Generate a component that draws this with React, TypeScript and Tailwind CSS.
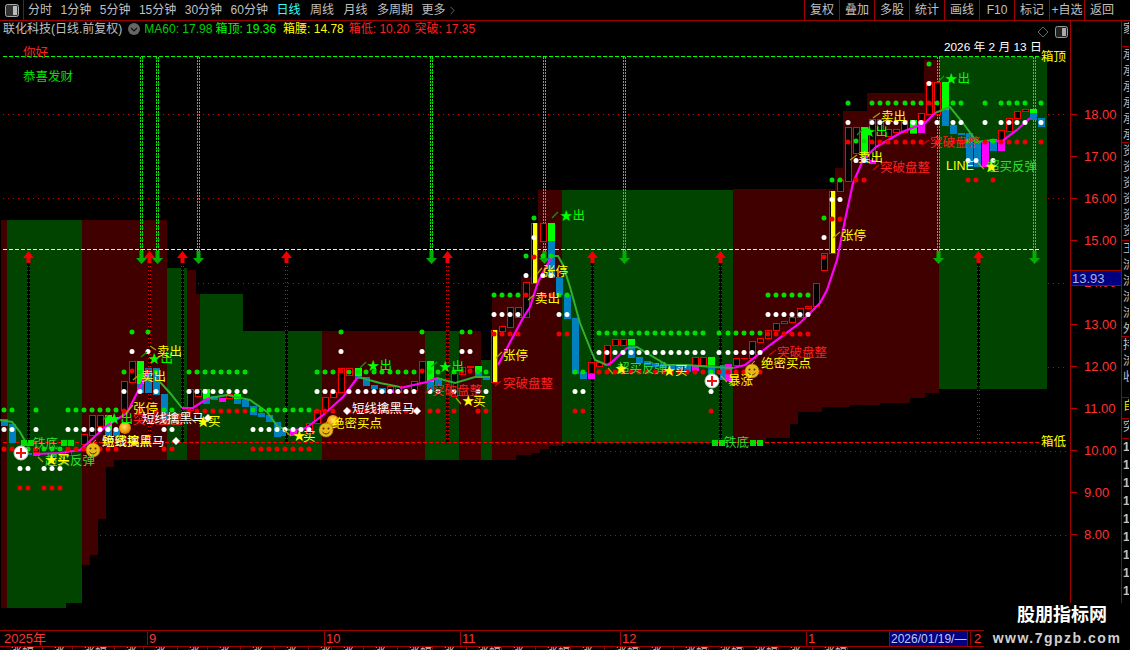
import { ChevronRight } from 'lucide-react';

const FONT = "[font-family:'Liberation_Sans','Noto_Sans_CJK_SC',sans-serif]";

const R = '#400000';
const G = '#004400';

// x0, x1, top, colour. the floor polygon cuts them off at the bottom
const bands: [number, number, number, string][] = [
  [1, 7, 220, R],
  [7, 82, 220, G],
  [82, 167, 220, R],
  [167, 187, 268, G],
  [187, 196, 270, R],
  [196, 200, 294, R],
  [200, 243, 294, G],
  [243, 322, 331, G],
  [322, 425, 331, R],
  [425, 459, 331, G],
  [459, 481, 331, R],
  [481, 492, 360, G],
  [492, 521, 295, R],
  [521, 538, 277, R],
  [538, 562, 190, R],
  [562, 733, 190, G],
  [733, 835, 189, R],
  [835, 843, 168, R],
  [843, 867, 111, R],
  [867, 924, 93, R],
  [924, 939, 60, R],
  [939, 1047, 57, G],
];

const floor =
  '0,612 0,608 66,608 66,603 82,603 82,565 90,565 90,555 98,555 98,519 106,519 106,467 114,467 114,460 516,460 516,455 532,455 532,453 540,453 540,449 549,449 549,446 563,446 563,443 766,443 766,438 790,438 790,424 798,424 798,412 822,412 822,407 850,407 850,405 880,405 880,403 910,403 910,398 925,398 925,393 939,393 939,389 1047,389 1047,612';

type Kind = 'h' | 'g' | 'b' | 'm' | 'y' | 'f';

const candles: [number, number, number, Kind][] = [
  [4, 419, 426, 'b'], [12, 424, 443, 'b'], [28, 453, 455, 'b'], [36, 452, 456, 'm'], [36, 448, 452, 'h'],
  [52, 455, 457, 'b'], [68, 450, 455, 'h'], [84, 434, 444, 'h'], [92, 415, 435, 'h'], [100, 415, 426, 'h'],
  [108, 415, 430, 'g'], [108, 430, 436, 'b'], [116, 430, 436, 'b'], [124, 381, 410, 'h'], [132, 361, 382, 'h'],
  [140, 361, 384, 'g'], [140, 384, 393, 'b'], [148, 368, 393, 'b'], [156, 368, 395, 'b'], [164, 394, 422, 'b'],
  [190, 389, 410, 'h'], [198, 389, 396, 'h'], [206, 389, 399, 'g'], [206, 399, 404, 'b'], [214, 396, 400, 'b'],
  [222, 398, 402, 'm'], [229, 394, 398, 'h'], [237, 394, 399, 'g'], [237, 399, 404, 'b'], [245, 400, 407, 'b'],
  [253, 406, 415, 'b'], [261, 413, 417, 'b'], [269, 415, 422, 'b'], [277, 422, 437, 'b'],
  [282, 430, 436, 'b'], [293, 430, 436, 'm'], [309, 423, 433, 'h'], [317, 410, 423, 'h'], [325, 397, 410, 'h'],
  [333, 392, 397, 'h'], [341, 368, 392, 'h'], [349, 368, 375, 'h'], [358, 368, 376, 'g'], [358, 376, 379, 'b'],
  [366, 377, 386, 'b'], [374, 385, 389, 'b'], [382, 388, 393, 'b'], [390, 386, 393, 'm'], [390, 386, 389, 'h'],
  [398, 386, 392, 'h'], [414, 381, 390, 'h'], [422, 361, 382, 'h'], [430, 361, 382, 'g'], [430, 382, 392, 'b'],
  [438, 378, 386, 'b'], [454, 373, 396, 'h'], [462, 367, 374, 'h'], [470, 366, 368, 'f'], [478, 366, 372, 'g'],
  [478, 372, 377, 'b'], [486, 376, 380, 'b'], [494, 330, 382, 'y'], [502, 326, 331, 'h'], [510, 307, 327, 'h'],
  [518, 307, 317, 'h'], [526, 282, 317, 'h'], [534, 223, 283, 'y'], [543, 223, 241, 'h'], [551, 223, 241, 'g'],
  [551, 241, 278, 'b'], [559, 277, 295, 'b'], [567, 295, 319, 'b'], [575, 318, 374, 'b'], [583, 372, 379, 'b'],
  [591, 373, 379, 'm'], [591, 362, 373, 'h'], [599, 362, 366, 'h'], [607, 345, 365, 'h'], [615, 339, 345, 'h'],
  [623, 339, 345, 'h'], [631, 339, 345, 'g'], [631, 345, 358, 'b'], [639, 357, 363, 'b'], [647, 361, 365, 'b'],
  [655, 363, 367, 'b'], [663, 364, 368, 'b'], [671, 365, 369, 'b'], [679, 365, 370, 'b'], [687, 365, 372, 'b'],
  [695, 357, 366, 'h'], [695, 366, 371, 'm'], [703, 357, 365, 'h'], [711, 357, 365, 'g'], [711, 365, 380, 'b'],
  [723, 365, 380, 'b'], [728, 364, 381, 'm'], [736, 358, 365, 'h'], [744, 358, 359, 'f'], [752, 341, 358, 'h'],
  [760, 338, 342, 'h'], [768, 330, 338, 'h'], [776, 323, 330, 'h'], [784, 321, 323, 'h'], [792, 317, 322, 'h'],
  [800, 308, 317, 'h'], [808, 306, 308, 'h'], [816, 283, 306, 'h'], [824, 253, 270, 'h'], [832, 191, 253, 'y'],
  [840, 180, 191, 'h'], [848, 127, 181, 'h'], [856, 127, 153, 'h'], [864, 127, 155, 'g'], [864, 155, 163, 'b'],
  [872, 119, 160, 'h'], [872, 160, 164, 'm'], [880, 119, 130, 'h'], [888, 129, 136, 'h'], [896, 129, 132, 'h'],
  [904, 120, 132, 'h'], [913, 120, 133, 'g'], [913, 133, 134, 'b'], [921, 120, 133, 'm'], [921, 113, 120, 'h'],
  [929, 82, 114, 'h'], [937, 82, 114, 'h'], [945, 82, 110, 'g'], [945, 110, 126, 'b'], [953, 125, 134, 'b'],
  [961, 133, 135, 'b'], [969, 133, 167, 'b'], [977, 142, 167, 'b'], [985, 142, 167, 'm'], [993, 139, 142, 'g'],
  [993, 142, 151, 'b'], [1001, 130, 141, 'h'], [1001, 141, 151, 'm'], [1009, 118, 131, 'h'], [1017, 111, 118, 'h'],
  [1025, 109, 111, 'h'], [1033, 109, 113, 'g'], [1033, 113, 120, 'b'], [1041, 118, 127, 'b'],
];

const greenLines = [
  '0,420 12,422 20,432 28,446',
  '160,382 170,393 182,408',
  '210,398 227,395 250,400 267,412 278,427 290,430',
  '358,377 380,383 400,387',
  '437,378 455,383 475,377 490,377',
  '552,256 558,256 563,265 570,287 580,323 590,348 595,360 607,365',
  '627,348 637,347 650,355 667,365 687,365 713,367 733,368',
  '935,113 950,107 963,123 977,142 993,140',
];

const pinkLines = [
  '36,454 60,453 80,450 90,441 105,427 127,413 140,387 147,372',
  '182,408 193,408 205,400 210,398',
  '290,431 306,428 323,415 343,397 358,377',
  '400,388 427,382 437,378',
  '498,365 523,318 530,307 538,282 547,265 552,256',
  '607,365 612,362 627,348',
  '733,368 745,365 770,345 800,323 820,303 827,290 837,260 845,220 853,183 863,160 876,147 902,132 925,123 935,113',
  '993,140 1001,142 1017,130 1030,118',
];

// each column: green dot at gy, white 19.5 lower, red 39 lower
const dotGroups: [number, number[]][] = [
  [410, [4, 12, 36, 68, 76, 84, 92, 100, 108, 116, 164, 172, 253, 261, 269, 277, 285, 293, 301, 309]],
  [449, [20, 28, 44, 52, 60]],
  [372, [124, 140, 156, 189, 197, 205, 213, 221, 229, 237, 245, 317, 325, 333, 349, 358, 366, 374, 382, 390, 398, 406, 414, 430, 438, 454, 478, 486, 575, 583, 711]],
  [332, [132, 148, 341, 422, 462, 470]],
  [295, [494, 502, 510, 518, 559, 567, 768, 776, 784, 792, 800, 808]],
  [256, [526, 543, 551]],
  [218, [534, 824]],
  [333, [599, 607, 615, 623, 631, 639, 647, 655, 663, 671, 679, 687, 695, 703, 719, 728, 736, 744, 752, 760]],
  [180, [832, 840]],
  [141, [856, 864, 968, 976, 993]],
  [103, [848, 872, 880, 888, 896, 905, 913, 921, 937, 953, 961, 985, 1001, 1009, 1017, 1025, 1041]],
  [64, [929]],
];

const YEL = '#ffff00';
const GRN = '#00ff00';
const LGR = '#33dd33';
const RED = '#ff2020';
const WHT = '#ffffff';

// text, x, baseline y, colour
const labels: [string, number, number, string][] = [
  ['你好', 23, 57, RED],
  ['恭喜发财', 23, 81, '#00e000'],
  ['箱顶', 1041, 61, YEL],
  ['箱低', 1041, 446, YEL],
  ['铁底', 33, 448, LGR],
  ['铁底', 724, 447, LGR],
  ['超买反弹', 45, 465, LGR],
  ['★', 45, 464, YEL],
  ['买', 57, 464, YEL],
  ['★出', 108, 423, GRN],
  ['短线擒黑马', 102, 446, WHT],
  ['绝密买点', 102, 446, YEL],
  ['张停', 133, 413, YEL],
  ['突破盘整', 133, 424, RED],
  ['短线擒黑马', 142, 423, WHT],
  ['★', 197, 426, YEL],
  ['买', 208, 426, YEL],
  ['★出', 148, 363, GRN],
  ['卖出', 157, 356, YEL],
  ['卖出', 141, 381, YEL],
  ['★', 293, 440, YEL],
  ['买', 303, 441, YEL],
  ['绝密买点', 332, 428, YEL],
  ['短线擒黑马', 352, 413, WHT],
  ['★出', 367, 370, GRN],
  ['★出', 439, 371, GRN],
  ['突破盘整', 432, 395, RED],
  ['★', 462, 405, YEL],
  ['买', 473, 406, YEL],
  ['张停', 503, 360, YEL],
  ['突破盘整', 503, 388, RED],
  ['卖出', 535, 303, YEL],
  ['张停', 543, 276, YEL],
  ['★出', 560, 220, GRN],
  ['超买反弹', 617, 373, LGR],
  ['★', 615, 373, YEL],
  ['★', 663, 375, YEL],
  ['买', 675, 375, YEL],
  ['暴涨', 728, 385, YEL],
  ['绝密买点', 761, 368, YEL],
  ['突破盘整', 777, 357, RED],
  ['张停', 841, 240, YEL],
  ['突破盘整', 880, 172, RED],
  ['卖出', 858, 162, YEL],
  ['★出', 863, 136, GRN],
  ['卖出', 881, 121, YEL],
  ['突破盘整', 930, 147, RED],
  ['★出', 945, 83, GRN],
  ['LINE', 946, 170, YEL],
  ['超买反弹', 987, 171, LGR],
  ['★', 985, 171, YEL],
];

// little pointer strokes in front of the labels: x1,y1,x2,y2,colour
const pointers: [number, number, number, number, string][] = [
  [38, 457, 43, 462, '#b0a000'], [150, 346, 156, 350, '#b0a000'], [133, 380, 140, 374, '#b0a000'],
  [127, 412, 133, 405, '#b0a000'], [141, 357, 147, 352, '#00a000'], [103, 420, 108, 415, '#00a000'],
  [190, 418, 196, 423, '#b0a000'], [284, 430, 291, 436, '#b0a000'], [360, 368, 366, 362, '#00a000'],
  [431, 367, 437, 362, '#00a000'], [425, 393, 431, 388, '#cc0000'], [456, 398, 461, 404, '#b0a000'],
  [496, 358, 502, 352, '#b0a000'], [495, 386, 501, 381, '#cc0000'], [528, 300, 534, 295, '#b0a000'],
  [537, 274, 542, 268, '#b0a000'], [552, 218, 558, 212, '#00a000'], [608, 368, 613, 374, '#b0a000'],
  [721, 376, 727, 382, '#b0a000'], [769, 355, 776, 350, '#cc0000'], [833, 238, 840, 232, '#b0a000'],
  [873, 170, 879, 165, '#cc0000'], [850, 160, 857, 155, '#b0a000'], [857, 135, 862, 130, '#00a000'],
  [873, 118, 880, 113, '#b0a000'], [922, 145, 929, 140, '#cc0000'], [938, 82, 944, 76, '#00a000'],
  [978, 163, 984, 169, '#b0a000'],
];

const greenArrows = [141, 157, 198, 431, 544, 624, 938, 1034];
const redArrows = [28, 149, 182, 286, 447, 592, 720, 978];
const ironMarks = [21, 28, 61, 68, 712, 719, 750, 757];

const leftTabs = ['分时', '1分钟', '5分钟', '15分钟', '30分钟', '60分钟', '日线', '周线', '月线', '多周期'];
const rightBtns = ['复权', '叠加', '多股', '统计', '画线', 'F10', '标记', '+自选', '返回'];
const axis = ['18.00', '17.00', '16.00', '15.00', '14.00', '13.00', '12.00', '11.00', '10.00', '9.00', '8.00'];

const sideCells: { h: number; text: string; cls: string }[] = [
  { h: 26, text: '家', cls: 'text-[#c0c0c0]' },
  { h: 96, text: '承承承承承承', cls: 'text-[#c0c0c0]' },
  { h: 98, text: '资资资资资资', cls: 'text-[#c0c0c0]' },
  { h: 96, text: '王流流流流外', cls: 'text-[#c0c0c0]' },
  { h: 61, text: '持流收', cls: 'text-[#c0c0c0]' },
  { h: 21, text: '自', cls: 'text-[#e0e000]' },
  { h: 20, text: '突', cls: 'text-[#c0c0c0]' },
];

const dateCells = [43, 30, 42, 29, 34, 30, 33, 34, 34, 23, 32, 34, 35, 34, 35, 34, 35, 34, 35, 34, 35, 35, 35, 34, 35];

function Candle({ c }: { c: [number, number, number, Kind] }) {
  const [x, top, bottom, kind] = c;
  const left = x - 3;
  const h = bottom - top;
  if (kind === 'h') return <rect x={left + 0.5} y={top + 0.5} width={6} height={h} fill="#000" stroke="#ff0000" />;
  if (kind === 'y')
    return (
      <g>
        <rect x={left + 0.5} y={top + 0.5} width={6} height={h} fill="#000" stroke="#ff0000" />
        <rect x={x - 1.5} y={top} width={4} height={h} fill="#ffff00" />
      </g>
    );
  const fill = kind === 'g' ? '#00ff00' : kind === 'b' ? '#0080c0' : kind === 'm' ? '#ff00ff' : '#ff0000';
  return <rect x={left} y={top} width={7} height={h} fill={fill} />;
}

function Smiley({ x, y }: { x: number; y: number }) {
  return (
    <g>
      <circle cx={x} cy={y} r={7} fill="#e8b818" stroke="#a88000" strokeWidth={0.5} />
      <circle cx={x - 2.5} cy={y - 1.5} r={1} fill="#503000" />
      <circle cx={x + 2.5} cy={y - 1.5} r={1} fill="#503000" />
      <path d={`M${x - 3.5} ${y + 2} Q${x} ${y + 6} ${x + 3.5} ${y + 2}`} fill="none" stroke="#503000" />
      <path d={`M${x} ${y - 7} q1 -2 3 -3`} fill="none" stroke="#e8b818" />
    </g>
  );
}

function Ball({ x, y }: { x: number; y: number }) {
  return <circle cx={x} cy={y} r={6} fill="url(#ball)" />;
}

function Plus({ x, y }: { x: number; y: number }) {
  return (
    <g>
      <circle cx={x} cy={y} r={7} fill="#fff" stroke="#c8c8c8" />
      <rect x={x - 5} y={y - 1} width={10} height={2} fill="#ee1111" />
      <rect x={x - 1} y={y - 5} width={2} height={10} fill="#ee1111" />
    </g>
  );
}

function Diamond({ x, y }: { x: number; y: number }) {
  return <polygon points={`${x - 4},${y} ${x},${y - 4} ${x + 4},${y} ${x},${y + 4}`} fill="#fff" />;
}

function Chart() {
  return (
    <svg viewBox="0 37 1070 593" width={1070} height={593} className={`block ${FONT}`} fontSize={12.5}>
      <defs>
        <radialGradient id="ball" cx="45%" cy="40%" r="65%">
          <stop offset="0%" stopColor="#ffe060" />
          <stop offset="70%" stopColor="#f09000" />
          <stop offset="100%" stopColor="#a06000" />
        </radialGradient>
      </defs>

      {[114, 198, 283, 367].map((y) => (
        <line key={y} x1={3} x2={1068} y1={y + 0.5} y2={y + 0.5} stroke="#d00000" strokeDasharray="1 4" />
      ))}

      {bands.map(([x0, x1, top, fill]) => (
        <rect key={x0} x={x0} y={top} width={x1 - x0} height={612 - top} fill={fill} shapeRendering="crispEdges" />
      ))}
      <polygon points={floor} fill="#000" shapeRendering="crispEdges" />

      {[451, 535].map((y) => (
        <line key={y} x1={y === 451 ? 550 : 100} x2={1068} y1={y + 0.5} y2={y + 0.5} stroke="#d00000" strokeDasharray="1 4" />
      ))}

      {greenArrows.map((x) => (
        <g key={x}>
          <line x1={x - 0.5} x2={x - 0.5} y1={57} y2={252} stroke="#00f000" strokeDasharray="2 1" />
          <line x1={x + 1.5} x2={x + 1.5} y1={57} y2={252} stroke="#00f000" strokeDasharray="2 1" />
          <polygon
            points={`${x - 1.5},251 ${x + 2.5},251 ${x + 2.5},258 ${x + 6},258 ${x + 0.5},264 ${x - 5},258 ${x - 1.5},258`}
            fill="#00b000"
          />
        </g>
      ))}
      {redArrows.map((x) => (
        <g key={x}>
          <rect x={x - 1} y={262} width={3} height={180} fill="#000" shapeRendering="crispEdges" />
          <line x1={x - 0.5} x2={x - 0.5} y1={262} y2={442} stroke="#e00000" strokeDasharray="1 3" />
          <line x1={x + 1.5} x2={x + 1.5} y1={262} y2={442} stroke="#e00000" strokeDasharray="1 3" />
          <polygon
            points={`${x + 0.5},251 ${x + 6},258 ${x + 2.5},258 ${x + 2.5},263 ${x - 1.5},263 ${x - 1.5},258 ${x - 5},258`}
            fill="#f00000"
          />
        </g>
      ))}

      <g shapeRendering="crispEdges">
        <line x1={3} x2={1040} y1={56.5} y2={56.5} stroke="#00ff00" strokeDasharray="4 2" />
        <line x1={3} x2={1040} y1={249.5} y2={249.5} stroke="#ffff40" strokeDasharray="4 2" />
        <line x1={3} x2={1040} y1={442.5} y2={442.5} stroke="#ff0000" strokeDasharray="4 2" />
        {candles.map((c, i) => (
          <Candle key={i} c={c} />
        ))}
      </g>

      {greenLines.map((p) => (
        <polyline key={p} points={p} fill="none" stroke="#30b030" strokeWidth={2} />
      ))}
      {pinkLines.map((p) => (
        <polyline key={p} points={p} fill="none" stroke="#ff00ff" strokeWidth={2.2} />
      ))}

      {dotGroups.map(([gy, xs]) =>
        xs.map((x) => (
          <g key={`${gy}-${x}`}>
            <circle cx={x} cy={gy} r={2.5} fill="#00e000" />
            <circle cx={x} cy={gy + 19.5} r={2.5} fill="#ffffff" />
            <circle cx={x} cy={gy + 39} r={2.5} fill="#f00000" />
          </g>
        )),
      )}

      {ironMarks.map((x) => (
        <rect key={x} x={x} y={440} width={6} height={6} fill="#00e000" shapeRendering="crispEdges" />
      ))}

      {pointers.map(([x1, y1, x2, y2, color], i) => (
        <line key={i} x1={x1} y1={y1} x2={x2} y2={y2} stroke={color} strokeWidth={1.2} />
      ))}

      <Ball x={125} y={428} />
      <Smiley x={93} y={450} />
      <Ball x={333} y={421} />
      <Smiley x={326} y={430} />
      <Smiley x={752} y={371} />
      <Plus x={21} y={453} />
      <Plus x={712} y={381} />
      <Diamond x={176} y={441} />
      <Diamond x={208} y={418} />
      <Diamond x={347} y={411} />
      <Diamond x={417} y={411} />

      <text x={944} y={51} fill={WHT} fontSize={11.8}>
        2026 年 2 月 13 日
      </text>
      {labels.map(([text, x, y, color], i) => (
        <text key={i} x={x} y={y} fill={color}>
          {text}
        </text>
      ))}
    </svg>
  );
}

export default function App() {
  return (
    <div className={`relative flex h-[650px] w-[1130px] flex-col overflow-hidden bg-black text-[12px] leading-none ${FONT}`}>
      {/* toolbar */}
      <div className="flex h-[21px] shrink-0 items-center border-b border-[#a00000] text-[#c0c0c0]">
        <div className="flex h-full w-[24px] items-center justify-center border-r border-[#a00000]">
          <svg width="14" height="13" viewBox="0 0 14 13">
            <rect x="0.5" y="0.5" width="13" height="12" rx="2" fill="#333" stroke="#aaa" />
            <rect x="8" y="2" width="4" height="9" fill="#bbb" />
          </svg>
        </div>
        <div className="ml-[4px] flex flex-1 items-center gap-[8.5px]">
          {leftTabs.map((t) => (
            <span
              key={t}
              className={t === '日线' ? 'mr-px text-[#33ffff]' : t === '周线' || t === '月线' ? 'mr-px' : ''}
            >
              {t}
            </span>
          ))}
          <span className="flex items-center">
            更多
            <ChevronRight size={13} strokeWidth={1} />
          </span>
        </div>
        <div className="mr-[11px] flex h-full">
          {rightBtns.map((t) => (
            <div key={t} className="flex h-full w-[35px] items-center justify-center border-l border-[#a00000]">
              {t}
            </div>
          ))}
        </div>
      </div>

      {/* chart and price axis */}
      <div className="flex min-h-0 flex-1">
        <div className="relative w-[1070px] shrink-0">
          <div className="flex h-[16px] items-center whitespace-nowrap pl-[3px]">
            <span className="text-[#c0c0c0]">联化科技(日线.前复权)</span>
            <span className="ml-[6px] flex h-[12px] w-[12px] items-center justify-center rounded-full bg-[#666]">
              <svg width="8" height="5" viewBox="0 0 8 5">
                <path d="M1 1l3 3 3-3" fill="none" stroke="#111" strokeWidth="1.2" />
              </svg>
            </span>
            <span className="ml-[4px] text-[#00d000]">MA60: 17.98</span>
            <span className="ml-[3px] text-[#00ff00]">箱顶: 19.36</span>
            <span className="ml-[7px] text-[#ffff00]">箱腰: 14.78</span>
            <span className="ml-[5px] text-[#ff2020]">箱低: 10.20</span>
            <span className="ml-[5px] text-[#ff2020]">突破: 17.35</span>
          </div>
          <Chart />
          {/* window icons, top right of the chart */}
          <div className="absolute right-[2px] top-[5px] flex items-center gap-[6px]">
            <svg width="12" height="12" viewBox="0 0 12 12">
              <path d="M6 1l5 5-5 5-5-5z" fill="none" stroke="#666" />
            </svg>
            <svg width="13" height="12" viewBox="0 0 13 12">
              <rect x="0.5" y="0.5" width="12" height="11" rx="2" fill="#222" stroke="#999" />
              <rect x="7" y="2" width="4" height="8" fill="#aaa" />
            </svg>
          </div>
        </div>

        <div className="relative w-[52px] shrink-0 border-x border-[#a00000] pt-[72px] text-[13px] text-[#ff3232]">
          {axis.map((v) => (
            <div key={v} className="flex h-[42.1px] items-center">
              <span className="h-px w-[6px] bg-[#c00000]" />
              <span className="ml-[7px]">{v}</span>
            </div>
          ))}
          <div className="absolute left-0 top-[249px] flex h-[16px] w-full items-center border-y border-[#a00000] bg-[#000080] pl-[1px] text-[13px] text-[#a8b0e0]">
            13.93
          </div>
        </div>

        <div className="w-[7px] shrink-0 overflow-hidden text-[12px] leading-[16px]">
          {sideCells.map((c) => (
            <div key={c.h + c.text} className={`w-[12px] overflow-hidden border-b border-[#a00000] pl-[1px] ${c.cls}`} style={{ height: c.h }}>
              {c.text}
            </div>
          ))}
          <div className="flex flex-col gap-[2px] pl-[1px] font-bold text-[#c0c0c0]">
            {['1', '1', '1', '1', '1', '1', '1', '1', '1'].map((n, i) => (
              <span key={i}>{n}</span>
            ))}
          </div>
        </div>
      </div>

      {/* date axis */}
      <div className="flex h-[17px] shrink-0 items-center border-y border-[#a00000] text-[13px] text-[#ff3232]">
        <span className="w-[147px] pl-[4px]">2025年</span>
        <span className="w-[177px] border-l border-[#a00000] pl-[1px]">9</span>
        <span className="w-[136px] border-l border-[#a00000] pl-[1px]">10</span>
        <span className="w-[160px] border-l border-[#a00000] pl-[1px]">11</span>
        <span className="w-[186px] border-l border-[#a00000] pl-[1px]">12</span>
        <span className="w-[83px] border-l border-[#a00000] pl-[1px]">1</span>
        <span className="flex h-full w-[79px] items-center border-x border-[#a00000] bg-[#000080] pl-[1px] text-[12px] text-[#c0c8f0]">
          2026/01/19/—
        </span>
        <span className="ml-[2px] border-l border-[#a00000] pl-[3px]">2</span>
      </div>

      {/* clipped bottom tab row */}
      <div className="flex h-[3px] shrink-0 overflow-hidden">
        {dateCells.map((w, i) => (
          <span key={i} className="h-full shrink-0 border-r border-[#a00000] pl-[10px] text-[12px] text-[#c0c0c0]" style={{ width: w }}>
            涨幅
          </span>
        ))}
      </div>

      {/* site watermark sits over the corner */}
      <div className="absolute bottom-0 right-0 flex h-[47px] w-[146px] flex-col items-center bg-black pt-[1px]">
        <span className="ml-[10px] text-[18px] font-bold leading-[22px] text-white">股朋指标网</span>
        <span className="mt-[3px] text-[14px] font-bold leading-[18px] tracking-[1.5px] text-[#d0d0d0]">www.7gpzb.com</span>
      </div>
    </div>
  );
}
